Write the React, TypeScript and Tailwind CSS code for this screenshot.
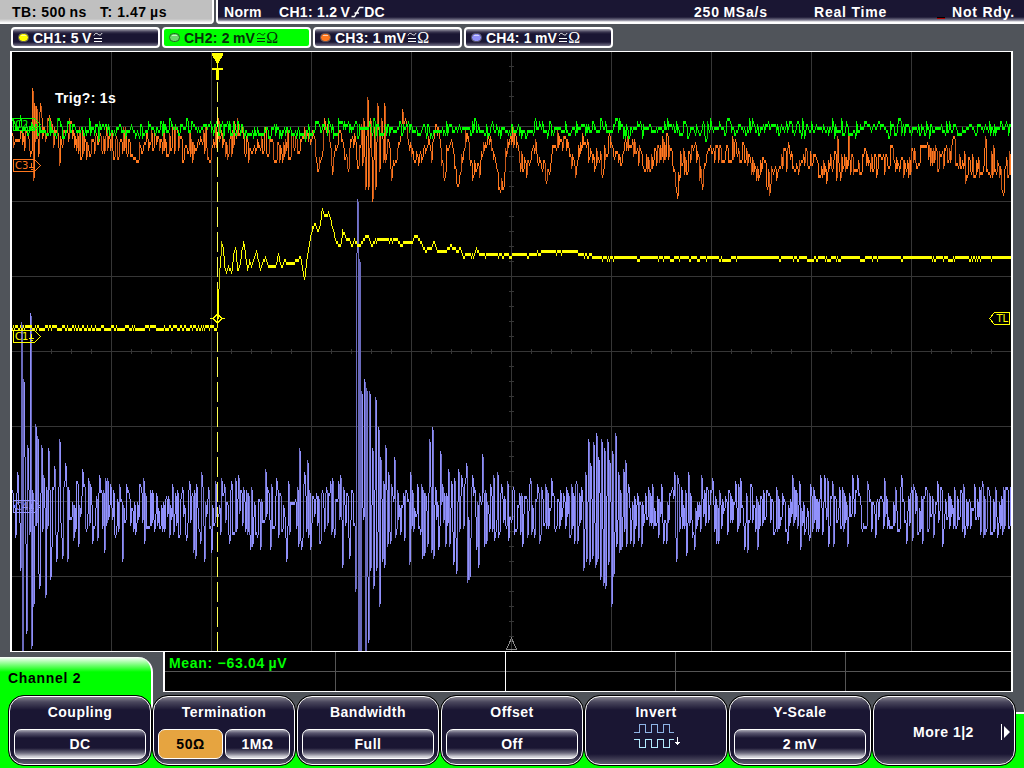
import { type ReactNode } from "react";

type Pt = [number, number];

const X0 = 12;
const X1 = 1011;

/* small seeded generator so the traces stay stable between renders */
function rng(seed: number) {
  let s = seed;
  return () => { s = (s * 1664525 + 1013904223) >>> 0; return s / 4294967296; };
}

const parse = (src: string): Pt[] =>
  src.trim().split(/\s+/).map((p) => p.split(",").map(Number) as Pt);

function lerp(pts: Pt[], x: number) {
  if (x <= pts[0][0]) return pts[0][1];
  for (let i = 1; i < pts.length; i++) {
    if (x <= pts[i][0]) {
      const [ax, ay] = pts[i - 1];
      const [bx, by] = pts[i];
      return ay + ((by - ay) * (x - ax)) / (bx - ax || 1);
    }
  }
  return pts[pts.length - 1][1];
}

const snap = (y: number) => Math.round((y - 1) / 3) * 3 + 1;

/* one vertical bar per column, joining the previous sample to the current one */
function columns(ys: number[], dimFrom: number, darkFrom = 9999) {
  let bright = "", dim = "", dark = "";
  for (let i = 0; i < ys.length; i++) {
    const prev = i ? ys[i - 1] : ys[i];
    const lo = Math.max(52, Math.min(prev, ys[i]) + (ys[i] > prev ? 3 : 0));
    const hi = Math.min(651, Math.max(prev, ys[i]) + (ys[i] < prev ? 0 : 3));
    const seg = `M${X0 + i + 0.5} ${lo}V${hi}`;
    const span = hi - lo;
    if (span >= darkFrom) dark += seg;
    else if (span >= dimFrom && i % 2) dim += seg;
    else bright += seg;
  }
  return { bright, dim, dark };
}

const C1 = parse(`12,328 216,327 217,318 218,288 219,268 221,241 222,243 224,265 226,272 228,265 231,270 233,252 235,247 237,268
239,266 241,250 243,241 245,255 247,267 249,260 251,266 253,260 256,250 258,259 260,268 262,261 265,256 267,262 269,265 275,264 278,254
280,261 282,266 284,260 290,262 296,260 300,256 302,268 304,277 306,260 308,248 310,236 312,226 315,223 317,230 319,226 321,211 322,208
324,214 326,215 328,211 330,217 332,226 335,238 338,244 340,243 342,230 344,232 346,239 349,239 352,245 354,238 358,244 362,241 365,235
368,236 371,244 375,239 395,240 412,242 415,235 419,236 422,244 425,247 431,247 433,241 436,247 438,251 446,251 449,245 452,247 461,248
463,253 474,253 476,249 479,253 533,253 548,251 577,252 583,255 600,256 612,257 1011,257`);

const C3 = parse(`12,134 28,136 31,150 32,88 33,178 34,103 35,140 36,107 38,155 40,103 42,135 50,122 52,134 58,140 59,164 60,138 64,142
69,128 75,138 92,146 100,136 118,148 126,138 138,150 145,138 170,142 196,150 200,130 204,140 211,154 217,130 227,150 232,136 240,124 243,138
247,148 252,154 258,138 263,142 270,150 282,150 290,143 300,142 306,134 310,138 313,130 317,170 322,146 324,119 327,130 329,137 332,168
335,150 338,136 341,135 344,152 348,166 350,137 354,140 358,165 361,125 362,164 363,118 365,186 367,97 368,187 370,118 372,198 374,128
375,188 377,103 379,168 381,119 383,160 384,103 385,160 388,138 391,177 394,160 397,150 400,132 402,113 405,120 408,138 411,148 415,156
419,159 423,150 428,138 431,155 434,128 438,128 441,154 444,182 446,150 451,138 454,162 457,186 459,178 462,152 466,133 469,150 472,172
475,165 479,172 482,148 487,138 492,145 495,160 498,180 503,186 505,152 508,148 512,132 516,140 519,158 525,170 530,160 535,143 540,160
548,176 551,150 554,153 557,136 560,143 567,145 570,155 574,168 578,148 584,136 588,150 594,162 598,150 602,165 605,150 609,138 615,160
620,155 625,144 630,145 636,144 644,168 650,163 655,150 658,153 666,144 672,158 677,188 680,158 684,160 695,150 702,182 704,162 712,152
725,154 735,148 743,155 756,170 763,165 768,176 769,198 770,176 772,180 780,162 790,156 797,168 804,154 815,162 827,176 829,162 836,162
837,139 838,163 847,160 848,139 849,162 862,162 875,164 890,158 900,168 915,156 935,150 940,162 952,146 960,162 975,168 985,158 997,164
1003,184 1005,162 1010,162`);

const C4 = parse(`17,472 19,520 20,568 21,322 22,660 23,379 24,455 25,540 26,630 27,445 29,532 30,313 31,645 32,490 33,603 35,424 37,436
38,570 39,585 41,445 42,528 43,475 45,594 46,487 48,448 50,576 51,548 54,466 56,558 59,439 61,536 62,555 64,481 65,463 67,558 72,502 73,537
77,481 78,543 82,469 86,530 88,478 90,485 92,540 96,496 97,537 99,475 104,549 110,484 115,534 119,484 122,558 128,490 135,531 143,478 144,540
152,490 162,528 168,496 181,493 186,537 188,490 193,549 195,555 196,485 199,530 201,472 204,558 208,487 211,549 221,478 224,484 238,475 243,487
250,546 252,543 260,548 265,469 270,546 276,478 278,534 286,558 288,481 298,543 299,448 301,546 304,472 307,460 310,546 315,500 325,493 330,481
334,535 338,481 340,475 342,565 343,487 349,555 352,490 355,588 356,253 357,199 358,660 359,259 360,660 361,391 362,505 363,518 364,379 365,660
366,388 367,574 368,640 369,391 370,567 372,448 373,585 375,397 376,567 378,427 379,604 380,457 382,558 383,481 384,565 385,445 387,543
388,472 390,540 391,485 394,457 395,534 397,490 400,531 404,538 409,561 410,472 413,528 417,484 420,531 421,484 422,556 424,552 425,493
427,543 429,439 431,549 432,427 433,556 435,487 438,547 440,451 442,484 445,545 448,469 449,543 451,481 453,561 454,478 456,571 458,469
459,528 461,476 462,484 466,463 467,580 469,576 470,538 472,475 476,546 478,565 480,500 482,454 484,543 485,490 489,528 490,484 493,475
495,531 497,472 498,534 501,484 506,527 507,481 508,537 512,490 514,531 522,543 530,478 534,534 537,484 539,540 551,478 555,528 563,492
569,534 571,484 574,541 576,481 577,540 581,487 583,568 585,472 586,558 588,439 589,562 590,463 592,555 593,442 595,564 596,433 597,558
598,457 600,577 601,439 603,583 604,448 605,585 607,439 608,562 609,460 611,604 612,451 613,573 615,433 616,543 618,472 619,550 620,490
621,546 623,469 625,460 626,543 628,484 630,540 633,543 637,493 638,537 641,543 648,487 652,484 658,534 663,540 666,540 671,490 674,472
676,558 677,475 679,528 686,552 688,472 692,536 694,546 701,475 707,487 710,490 712,478 716,540 725,496 735,481 738,485 740,478 744,546
747,549 757,546 767,490 776,487 787,540 792,475 799,481 800,546 809,538 810,484 812,530 820,475 824,475 828,543 832,481 833,543 839,487
847,543 852,475 857,475 862,528 868,487 875,534 884,478 889,525 895,487 901,475 906,540 913,484 922,541 925,487 933,534 937,481 942,543
954,487 964,534 974,484 982,481 985,532 995,487 997,534 1007,487`);

function buildYellow() {
  const r = rng(11);
  const ys: number[] = [];
  let hold = 0;
  for (let x = X0; x < X1; x++) {
    if (x < 217) {
      if (r() < 0.36) hold = hold ? 0 : 3;
      ys.push(325 + hold);
    } else if (x < 375) {
      ys.push(snap(lerp(C1, x)));
    } else {
      if (hold ? r() < 0.55 : r() < 0.16) hold = hold ? 0 : 3;
      ys.push(snap(lerp(C1, x) - 1) + hold);
    }
  }
  return ys;
}

function buildGreen() {
  const r = rng(97);
  const mid: Pt[] = [[12, 127], [215, 127], [235, 129], [270, 131], [300, 131], [315, 127], [1011, 127]];
  const ys: number[] = [];
  let y = 0;
  for (let x = X0; x < X1; x++) {
    if (r() < 0.7) y = (r() + r() + r() - 1.5) * 8.5;
    ys.push(snap(lerp(mid, x) + y));
  }
  return ys;
}

function buildOrange() {
  const r = rng(523);
  const amp: Pt[] = [[12, 17], [300, 16], [310, 6], [360, 9], [388, 9], [480, 9], [560, 12], [680, 15], [760, 13], [1011, 19]];
  const fixed = new Map(C3);
  const ys: number[] = [];
  let n = 0;
  let sign = 1;
  for (let x = X0; x < X1; x++) {
    if (r() < 0.7) {
      if (r() < 0.8) sign = -sign;
      n = sign * (r() * 0.6 + r() * r() * 0.7) * lerp(amp, x);
    }
    const sharp = x < 45 || (x > 355 && x < 392);
    ys.push(snap(fixed.has(x) && sharp ? fixed.get(x)! : lerp(C3, x) + n));
  }
  return ys;
}

function buildViolet() {
  const r = rng(3001);
  const fixed = new Map(C4);
  const ys: number[] = [];
  let n = 0;
  let sign = 1;
  for (let x = X0; x < X1; x++) {
    if (r() < 0.8) {
      if (r() < 0.85) sign = -sign;
      n = sign * (r() * 0.65 + r() * r() * 0.5) * 32;
    }
    ys.push(snap(fixed.get(x) ?? 510 + n));
  }
  return ys;
}

const violet = columns(buildViolet(), 36, 240);
const yellow = columns(buildYellow(), 12);
const orange = columns(buildOrange(), 12);
const green = columns(buildGreen(), 14);

function Trace({ d, bright, dim, dark }: { d: { bright: string; dim: string; dark: string }; bright: string; dim: string; dark: string }) {
  return (
    <g fill="none" strokeWidth={1}>
      <path d={d.dark} stroke={dark} />
      <path d={d.dim} stroke={dim} />
      <path d={d.bright} stroke={bright} />
    </g>
  );
}

function Tag({ y, color, name }: { y: number; color: string; name: string }) {
  return (
    <g fill="none" stroke={color}>
      <path d={`M13.5 ${y + 0.5}H34.5L40.5 ${y + 6.5}L34.5 ${y + 12.5}H13.5Z`} />
      <path d={`M31.5 ${y + 4}V${y + 8}M29 ${y + 8.5}H34M30.5 ${y + 10.5}H32.5`} />
      <text x={15} y={y + 10} fill={color} stroke="none" fontSize={10} fontWeight={400} fontFamily='"DejaVu Sans", sans-serif'>{name}</text>
    </g>
  );
}

function Plot() {
  const vert = [111, 211, 311, 411, 511, 611, 711, 811, 911];
  const horz = [126, 201, 276, 351, 426, 501, 576];
  const hTicks = Array.from({ length: 49 }, (_, i) => 31 + i * 20);
  const vTicks = Array.from({ length: 39 }, (_, i) => 66 + i * 15);
  return (
    <svg width={1003} height={601} viewBox="10 51 1003 601" shapeRendering="crispEdges" className="block">
      <rect x={10} y={51} width={1003} height={601} fill="#fff" />
      <rect x={12} y={52} width={999} height={599} fill="#000" />
      <g stroke="#363636">
        {vert.map((x) => <path key={x} d={`M${x + 0.5} 52V651`} />)}
        {horz.map((y) => <path key={y} d={`M12 ${y + 0.5}H1011`} />)}
        {hTicks.map((x) => <path key={x} d={`M${x + 0.5} 349V354`} />)}
        {vTicks.map((y) => <path key={y} d={`M509 ${y + 0.5}H514`} />)}
      </g>
      <path d="M511.5 638L506.5 649.5H516.5Z" fill="none" stroke="#8a8a8a" />
      <Trace d={violet} bright="#9090fa" dim="#7474cc" dark="#6a6abc" />
      <Trace d={yellow} bright="#ffff00" dim="#c8c800" dark="#c8c800" />
      <Trace d={orange} bright="#ff781e" dim="#c8591a" dark="#c8591a" />
      <Trace d={green} bright="#00ff00" dim="#00c800" dark="#00c800" />
      <path d="M217.5 82V651" stroke="#ffff50" strokeDasharray="20 5" />
      <path d="M217.5 288V328" stroke="#ffff00" />
      <path d="M212 53H223V55L218.5 63H216.5L212 55Z" fill="#ffff00" />
      <path d="M212 68H223V70H219V80H216V70H212Z" fill="#ffff00" />
      <path d="M217 63H218V68H217Z" fill="#ffff00" />
      <path d="M210 318.5H213L217.5 314L222 318.5L217.5 323L213 318.5M222 318.5H225" fill="none" stroke="#ffff00" />
      <Tag y={118} color="#00ff00" name="C2" />
      <Tag y={159} color="#ff781e" name="C3" />
      <Tag y={330} color="#ffff00" name="C1" />
      <Tag y={500} color="#9090fa" name="C4" />
      <path d="M1009.5 312.5V324.5H994.5L989.5 318.5L994.5 312.5Z" fill="none" stroke="#ffff00" />
      <text x={996.5} y={322} fill="#ffff00" fontSize={10} fontWeight={400} fontFamily='"DejaVu Sans", sans-serif'>TL</text>
      <text x={55} y={103} fill="#fff" fontSize={14} fontWeight={700} letterSpacing={0.3} fontFamily='"Liberation Sans", Arial, sans-serif'>Trig?: 1s</text>
    </svg>
  );
}

function Chip({ dot, label, ohm, active }: { dot: string; label: string; ohm?: boolean; active?: boolean }) {
  return (
    <div className={`flex h-[21px] w-[149px] items-center rounded-[4px] border-2 border-white pl-[5px] ${active
      ? "bg-[#00ff00] text-[#06300a]"
      : "bg-[linear-gradient(to_bottom,#a5a4b0_0px,#3a3650_3px,#1a1633_5px,#1a1633_13px,#77758a_17px)] text-white"}`}>
      <svg width={11} height={9} viewBox="0 0 11 9" className="mr-[4px] shrink-0">
        <rect x={0.5} y={0.5} width={10} height={8} rx={4} fill={dot} stroke={active ? "#1c6a1c" : "#55535f"} />
        <path d="M3 2.5H8" stroke="#fff" strokeOpacity={0.6} />
      </svg>
      <span className="tracking-[0.25px]">{label}</span>
      <svg width={10} height={11} viewBox="0 0 10 11" className="ml-px shrink-0" fill="none" stroke="currentColor">
        <path d="M1 3.5C2 1 3.5 1 5 2.2S8 3.4 9 1M1 6.5H9M1 9.5H9" />
      </svg>
      {ohm && <span className="font-['Liberation_Serif'] text-[16px] leading-[14px] font-normal">Ω</span>}
    </div>
  );
}

function Field({ children, active, className = "" }: { children: ReactNode; active?: boolean; className?: string }) {
  return (
    <div className={`flex h-[30px] items-center justify-center rounded-[7px] border-[1.5px] border-white ${active
      ? "bg-[#e6a440] text-black"
      : "bg-[linear-gradient(to_bottom,#aaa9b5_0px,#5a5770_3px,#1a1633_8px,#1a1633_18px,#6d6b7e_23px,#d8d8de_27px)] text-white"} ${className}`}>
      {children}
    </div>
  );
}

function SoftKey({ title, children }: { title?: string; children: ReactNode }) {
  return (
    <div className="h-[71px] w-[144px] shrink-0 rounded-[16px] border border-black bg-black">
      <div className="flex h-[69px] flex-col rounded-[15px] border-[1.5px] border-white bg-[linear-gradient(to_bottom,#85838f_0px,#4a475d_5px,#1a1633_13px,#1a1633_57px,#5a576b_66px)] px-[4px] text-white">
        {title && <div className="mt-[7px] h-[17px] text-center leading-[17px]">{title}</div>}
        {children}
      </div>
    </div>
  );
}

export default function App() {
  return (
    <div className="relative flex h-[768px] w-[1024px] flex-col overflow-hidden bg-[#50545a] font-['Liberation_Sans',Arial,sans-serif] text-[14px] leading-[16px] font-bold whitespace-pre">
      <header className="flex h-[24px] gap-[2px] text-white">
        <div className="flex w-[214px] rounded-br-[4px] border-r-2 border-white bg-[linear-gradient(to_bottom,#c0c0c0_19px,#fff_23px)] pt-[4px] pl-[12px] text-black">
          <span className="w-[88px] tracking-[0.5px]">TB: 500{"\u2009"}ns</span>
          <span className="tracking-[0.55px]">T: 1.47{"\u2009"}µs</span>
        </div>
        <div className="flex flex-1 rounded-bl-[4px] border-l-2 border-white bg-[linear-gradient(to_bottom,#1a1633_17px,#77758a_20px,#fff_22px)] pt-[4px] pl-[6px]">
          <span className="w-[55px] tracking-[0.3px]">Norm</span>
          <span className="flex w-[415px] tracking-[0.3px]">
            CH1: 1.2{"\u2009"}V
            <svg width={13} height={12} viewBox="0 0 13 12" className="mt-[2px] ml-px" fill="none" stroke="#fff" strokeWidth={1.5}>
              <path d="M0.5 10.5H3.5L8.5 1.5H12.5M3.5 7H8" />
            </svg>
            DC
          </span>
          <span className="w-[120px] tracking-[0.8px]">250{"\u2009"}MSa/s</span>
          <span className="w-[123px] tracking-[0.8px]">Real Time</span>
          <i className="mt-[13px] mr-[7px] h-[2px] w-[8px] border-b border-[#b00000] bg-black" />
          <span className="tracking-[0.8px]">Not Rdy.</span>
        </div>
      </header>

      <div className="mt-[3px] flex gap-[2px] pl-[11px]">
        <Chip dot="#ffff00" label={"CH1: 5\u2009V"} />
        <Chip dot="#6ad86a" label={"CH2: 2\u2009mV"} ohm active />
        <Chip dot="#ff781e" label={"CH3: 1\u2009mV"} ohm />
        <Chip dot="#9090fa" label={"CH4: 1\u2009mV"} ohm />
      </div>

      <div className="mt-[3px] pl-[10px]"><Plot /></div>

      <div className="relative flex h-[116px] flex-col">
        {/* green menu backdrop */}
        <div className="absolute top-[60px] right-0 bottom-0 left-0 border-t-2 border-white bg-[#00ff00]" />
        <div className="absolute top-[52px] left-[140px] h-[40px] w-[872px] bg-[#50545a]" />
        <div className="relative flex h-[43px]">
          <div className="mt-[5px] h-[111px] w-[153px] shrink-0 rounded-tr-[15px] border-r-2 border-white bg-[linear-gradient(to_bottom,#fff_0px,#9f9_6px,#00ff00_15px)] pt-[13px] pl-[8px] tracking-[0.7px] text-black [clip-path:inset(0_0_50px_0)]">
            Channel 2
          </div>
          <div className="ml-[10px] flex h-[40px] w-[850px] border-r-2 border-b border-l-2 border-white bg-black">
            <div className="flex w-[341px] flex-col border-r border-white">
              <div className="h-[20px] border-b border-[#555] pt-[3px] pl-[4px] tracking-[0.7px] text-[#00ff00]">Mean: −63.04{"\u2009"}µV</div>
              <div className="h-[19px]" />
            </div>
            <div className="h-[20px] flex-1 border-b border-[#555]" />
          </div>
          <i className="absolute top-0 left-[335px] h-[39px] w-px bg-[#555]" />
          <i className="absolute top-0 left-[675px] h-[39px] w-px bg-[#555]" />
          <i className="absolute top-0 left-[845px] h-[39px] w-px bg-[#555]" />
        </div>
        <div className="absolute top-[61px] left-0 h-[55px] w-[80px] bg-[#00ff00]" />
        <div className="relative flex pl-[8px] tracking-[0.5px]">
          <SoftKey title="Coupling"><Field className="mt-[8px]">DC</Field></SoftKey>
          <SoftKey title="Termination">
            <div className="mt-[8px] flex justify-between">
              <Field active className="w-[65px]">50Ω</Field>
              <Field className="w-[65px]">1MΩ</Field>
            </div>
          </SoftKey>
          <SoftKey title="Bandwidth"><Field className="mt-[8px]">Full</Field></SoftKey>
          <SoftKey title="Offset"><Field className="mt-[8px]">Off</Field></SoftKey>
          <SoftKey title="Invert">
            <svg width={48} height={28} viewBox="632 722 48 28" className="mx-auto mt-[1px]" fill="none" shapeRendering="crispEdges">
              <path d="M634 732.5H639.5V724.5H645.5V732.5H651.5V724.5H657.5V732.5H663.5V724.5H669.5V732.5H674" stroke="#8fb4e6" />
              <path d="M634 739.5H639.5V747.5H645.5V739.5H651.5V747.5H657.5V739.5H663.5V747.5H669.5V739.5H674" stroke="#b4ecff" />
              <path d="M677.5 737V744" stroke="#fff" />
              <path d="M675 742H680L677.5 745.5Z" fill="#fff" />
            </svg>
          </SoftKey>
          <SoftKey title="Y-Scale"><Field className="mt-[8px]">2{"\u2009"}mV</Field></SoftKey>
          <SoftKey>
            <div className="mt-[27px] flex items-center">
              <span className="w-[132px] text-center">More 1|2</span>
              <svg width={9} height={16} viewBox="0 0 9 16" className="-ml-[8px] shrink-0"><path d="M0 0H1V16H0ZM3 2L9 8L3 14Z" fill="#fff" /></svg>
            </div>
          </SoftKey>
        </div>
      </div>
    </div>
  );
}
